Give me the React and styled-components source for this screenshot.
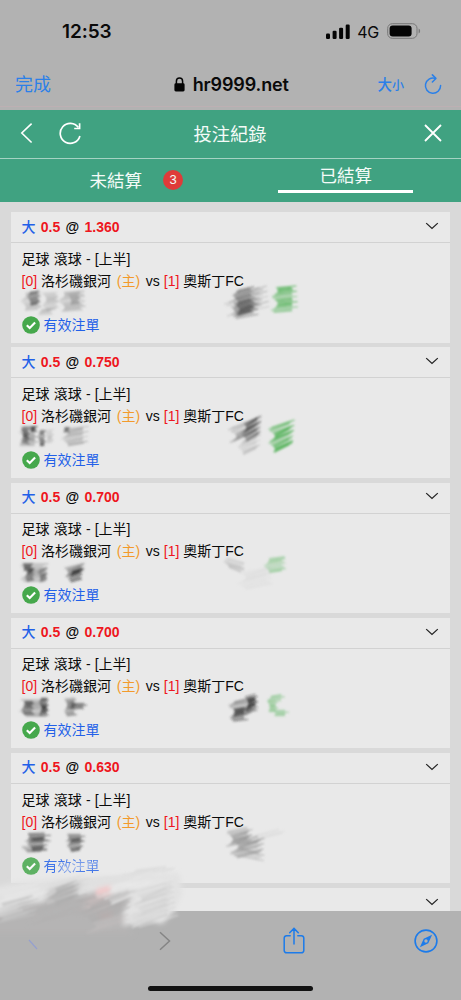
import React from 'react';
import styled, { createGlobalStyle } from 'styled-components';

const GlobalStyle = createGlobalStyle`
  * {
    box-sizing: border-box;
  }
  body {
    margin: 0;
    background: #b2b2b2;
    font-family: 'Liberation Sans', 'Noto Sans CJK TC', sans-serif;
  }
`;

const Phone = styled.div`
  position: relative;
  display: flex;
  flex-direction: column;
  width: 461px;
  height: 1000px;
  overflow: hidden;
  background: #b2b2b2;
  color: #0a0a0a;

  svg {
    display: block;
    flex: none;
  }
`;
const StatusBar = styled.div`
  display: flex;
  align-items: center;
  height: 62px;
  padding: 0 40px 0 62px;
  font-family: Inter, sans-serif;
`;
const Clock = styled.span`
  flex: 1;
  font-size: 19px;
  font-weight: 600;
  letter-spacing: -0.1px;
`;
const Network = styled.span`
  margin: 1px 8px 0 7px;
  font-size: 16px;
  font-weight: 400;
  letter-spacing: -0.2px;
`;
const AddressBar = styled.div`
  display: grid;
  grid-template-columns: 1fr auto 1fr;
  align-items: center;
  height: 45px;
  padding: 0 19px 2px 15px;
  border-bottom: 1px solid #bdb0b3;
`;
const LinkText = styled.span`
  color: #2b80e8;
  font-family: 'Noto Sans CJK TC', sans-serif;
  font-size: ${(props) => props.$size || 18}px;
  line-height: 24px;
`;
const Address = styled.div`
  display: flex;
  align-items: center;
  gap: 7.5px;
  padding: 2px 0 0 6px;
  font-family: Inter, sans-serif;
  font-size: 18px;
  font-weight: 600;
  letter-spacing: -0.15px;
`;
const AddressActions = styled.div`
  display: flex;
  align-items: center;
  justify-content: flex-end;
  padding-top: 2px;

  svg {
    margin-left: 20px;
  }
`;
const SizeLabel = styled.div`
  display: flex;
  align-items: baseline;

  span {
    font-weight: 500;
  }
`;
const Header = styled.div`
  display: grid;
  grid-template-columns: 1fr auto 1fr;
  align-items: center;
  height: 49px;
  margin-top: 3px;
  padding: 0 18px 2px 19px;
  background: #40a281;
  border-bottom: 1px solid #a5d3c3;
`;
const HeaderIcons = styled.div`
  display: flex;
  align-items: center;
  gap: 24px;
  justify-content: ${(props) => (props.$end ? 'flex-end' : 'flex-start')};
`;
const Title = styled.h1`
  margin: 0 0 0 -2px;
  color: #f4fbf8;
  font-family: 'Noto Sans CJK TC', sans-serif;
  font-size: 18.3px;
  font-weight: 400;
  line-height: 28px;
`;
const Tabs = styled.div`
  display: flex;
  height: 43px;
  background: #40a281;
`;
const Tab = styled.div`
  display: flex;
  flex: 1;
  align-items: center;
  justify-content: center;
  padding-left: ${(props) => (props.$active ? 0 : 42)}px;
  padding-right: 21px;
  color: #f4fbf8;
  font-family: 'Noto Sans CJK TC', sans-serif;
  font-size: 17.5px;
`;
const TabLabel = styled.span`
  width: ${(props) => (props.$active ? '135px' : 'auto')};
  height: ${(props) => (props.$active ? '34px' : 'auto')};
  margin-bottom: ${(props) => (props.$active ? 9 : 2)}px;
  border-bottom: ${(props) => (props.$active ? '3px solid #fff' : 'none')};
  line-height: ${(props) => (props.$active ? 32 : 34)}px;
  text-align: center;
`;
const Badge = styled.span`
  width: 20px;
  height: 20px;
  margin: 0 0 2px 21px;
  border-radius: 50%;
  background: #df3b39;
  font-family: 'Liberation Sans', sans-serif;
  font-size: 13px;
  line-height: 20px;
  text-align: center;
`;
const List = styled.div`
  display: flex;
  flex-direction: column;
  gap: 4.7px;
  height: 709px;
  padding: 10.2px 11px 0 10.5px;
  overflow: hidden;
  background: #d9d9d9;
`;
const CardBox = styled.div`
  position: relative;
  flex: none;
  height: 130.5px;
  background: #e9e9e9;
`;
const CardHead = styled.div`
  display: flex;
  align-items: center;
  justify-content: space-between;
  height: 31px;
  padding: 0 11.5px 0 11px;
  border-bottom: 1px solid #d2d2d2;

  svg {
    margin-bottom: 2.5px;
  }
`;
const Pick = styled.div`
  font-size: 14px;
  font-weight: 700;
  word-spacing: 1.4px;
  line-height: 29px;
`;
const Side = styled.span`
  color: #2260e8;
  font-weight: 500;
`;
const CardBody = styled.div`
  padding: 4.7px 11px 0;
`;
const Line = styled.div`
  height: 22px;
  font-size: 14px;
  line-height: 22px;
  white-space: nowrap;
  word-spacing: ${(props) => props.$spread || 0}px;
`;
const Red = styled.span`
  color: #ee1620;
`;
const Home = styled.span`
  margin: 0 1.8px 0 2px;
  color: #f39a2b;
`;
const Status = styled.div`
  display: flex;
  align-items: center;
  gap: 4px;
  height: 22px;
  margin-top: 22px;
  color: #2260e8;
  font-size: 14px;
  line-height: 22px;
  opacity: ${(props) => (props.$faded ? 0.85 : 1)};
`;
const Overlay = styled.svg`
  position: absolute;
  top: ${(props) => props.$top || 0}px;
  left: 0;
  pointer-events: none;
`;
const Toolbar = styled.div`
  display: grid;
  grid-template-columns: 127px 125px 131px auto;
  align-items: center;
  height: 59px;
  padding-left: 31px;

  svg:first-child {
    margin-left: -6px;
  }
`;
const HomeIndicator = styled.div`
  width: 165px;
  height: 5px;
  margin: 16px auto 0;
  border-radius: 3px;
  background: #121212;
`;

const GREEN = '#55b35a';

// patch: [x, y, width, height, slope, colour, opacity]
const hatch = ([x, y, w, h, slope, color, opacity], seed) => {
  const strokes = [];
  const count = Math.max(3, Math.round(h / 1.7));
  for (let i = 0; i < count; i += 1) {
    const a = Math.abs(Math.sin((i + 1) * 12.98 + seed * 7.3));
    const b = Math.abs(Math.sin((i + 1) * 4.17 + seed * 3.1));
    const x1 = x + a * w * 0.25;
    const x2 = x + w - b * w * 0.25;
    const y1 = y + (h * (i + 0.5)) / count;
    strokes.push(
      <path
        key={`${seed}-${i}`}
        d={`M${x1} ${y1 + slope * w * 0.5}L${x2} ${y1 - slope * w * 0.5}`}
        stroke={color}
        strokeWidth={1.3 + b}
        strokeOpacity={opacity * (0.45 + a * 0.55)}
      />
    );
  }
  return strokes;
};

const bets = [
  {
    odds: '1.360',
    smudges: [
      [9, 80, 24, 18, 0.05, '#999', 0.4],
      [16, 79, 14, 14, 0.1, '#444', 0.6],
      [31, 80, 18, 18, 0.05, '#888', 0.35],
      [46, 79, 31, 20, 0.05, '#888', 0.4],
      [27, 97, 16, 6, 0.05, '#888', 0.4],
      [57, 81, 13, 12, 0.1, '#666', 0.35],
      [212, 78, 48, 22, 0.2, '#888', 0.4],
      [221, 76, 24, 26, 0.17, '#555', 0.55],
      [222, 88, 26, 17, 0.16, '#444', 0.6],
      [260, 74, 27, 26, 0.06, GREEN, 0.75],
    ],
  },
  {
    odds: '0.750',
    smudges: [
      [8, 79, 20, 20, 0, '#666', 0.5],
      [10, 80, 9, 17, -0.2, '#333', 0.6],
      [18, 79, 8, 6, 0.1, '#333', 0.7],
      [27, 83, 8, 16, 0, '#333', 0.65],
      [34, 82, 9, 14, 0.1, '#999', 0.4],
      [50, 80, 28, 18, 0.1, '#777', 0.4],
      [52, 80, 7, 6, 0, '#333', 0.6],
      [217, 75, 34, 16, 0.32, '#777', 0.5],
      [230, 72, 21, 19, 0.38, '#444', 0.6],
      [226, 90, 25, 15, 0.25, '#999', 0.35],
      [257, 76, 28, 26, 0.28, GREEN, 0.85],
    ],
  },
  {
    odds: '0.700',
    smudges: [
      [9, 80, 30, 19, 0, '#777', 0.5],
      [10, 80, 13, 8, 0, '#333', 0.6],
      [14, 86, 10, 12, 0.2, '#333', 0.6],
      [27, 85, 10, 13, 0.3, '#444', 0.5],
      [51, 82, 25, 10, 0.2, '#555', 0.5],
      [57, 86, 16, 12, 0.2, '#222', 0.65],
      [212, 77, 24, 10, -0.2, '#999', 0.4],
      [225, 86, 40, 18, 0.15, '#ccc', 0.25],
      [252, 74, 25, 15, 0.08, GREEN, 0.4],
    ],
  },
  {
    odds: '0.700',
    smudges: [
      [8, 81, 29, 18, 0, '#777', 0.5],
      [10, 83, 14, 14, 0, '#333', 0.6],
      [28, 80, 10, 18, 0, '#222', 0.75],
      [53, 80, 13, 18, 0.1, '#555', 0.6],
      [55, 85, 22, 6, 0, '#333', 0.5],
      [217, 81, 30, 16, 0.15, '#555', 0.55],
      [234, 77, 13, 16, 0.2, '#222', 0.75],
      [219, 90, 18, 13, 0.1, '#333', 0.65],
      [256, 77, 18, 7, 0.1, GREEN, 0.5],
      [256, 82, 11, 12, 0, GREEN, 0.5],
      [260, 92, 18, 6, 0, GREEN, 0.4],
    ],
  },
  {
    odds: '0.630',
    faded: true,
    smudges: [
      [11, 80, 29, 9, 0.02, '#444', 0.6],
      [16, 85, 21, 13, 0.06, '#333', 0.65],
      [10, 93, 26, 6, 0.02, '#555', 0.5],
      [52, 81, 23, 8, 0, '#555', 0.55],
      [56, 86, 17, 12, 0.1, '#333', 0.65],
      [215, 76, 28, 16, 0.15, '#888', 0.7],
      [218, 86, 38, 16, 0.18, '#888', 0.6],
      [222, 97, 34, 9, -0.15, '#999', 0.5],
      [240, 79, 37, 5, 0.18, '#bbb', 0.3],
      [36, 109, 58, 9, 0.1, '#ececec', 0.5],
      [110, 115, 60, 6, 0.06, '#ccc', 0.35],
    ],
  },
];

// fine streaks laid over the smear
const smearPatches = [
  [-12, 886, 66, 16, 0.14, '#e8e8e8', 0.6],
  [-10, 899, 52, 20, 0.16, '#c4c4c4', 0.7],
  [-8, 904, 34, 10, 0.2, '#dedede', 0.6],
  [34, 880, 62, 18, 0.2, '#d8d8d8', 0.5],
  [48, 884, 34, 18, 0.25, '#a8a8a8', 0.5],
  [24, 901, 74, 18, 0.2, '#b3b2b2', 0.6],
  [76, 893, 60, 22, 0.25, '#adabab', 0.6],
  [92, 878, 80, 18, 0.22, '#ebebeb', 0.6],
  [126, 884, 54, 38, 0.22, '#e6e6e6', 0.55],
  [130, 886, 48, 34, 0.22, '#bfbfbf', 0.35],
  [84, 918, 50, 12, 0.18, '#c2bebe', 0.5],
  [122, 908, 44, 15, 0.25, '#dadada', 0.6],
  [60, 876, 110, 6, 0.1, '#dcdcdc', 0.5],
  [130, 870, 50, 12, 0.1, '#e2e2e2', 0.5],
];

const Chevron = () => (
  <svg width="14" height="8" viewBox="0 0 14 8" fill="none">
    <path d="M1.2 1.1L7 6.5l5.8-5.4" stroke="#222" strokeWidth="1.25" />
  </svg>
);

const CheckIcon = () => (
  <svg width="18" height="18" viewBox="0 0 18 18" fill="none">
    <circle cx="9" cy="9" r="8.8" fill="#46a84c" />
    <path d="M4.8 9.2l2.9 2.8 5.4-5.5" stroke="#fff" strokeWidth="2.1" />
  </svg>
);

const BetCard = ({ bet, seed }) => (
  <CardBox>
    <CardHead>
      <Pick>
        {bet && (
          <>
            <Side>大</Side> <Red>0.5</Red> @ <Red>{bet.odds}</Red>
          </>
        )}
      </Pick>
      <Chevron />
    </CardHead>
    {bet && (
      <CardBody>
        <Line $spread={0.3}>足球 滾球 - [上半]</Line>
        <Line>
          <Red>[0]</Red> 洛杉磯銀河 <Home>(主)</Home> vs <Red>[1]</Red>{' '}
          奧斯丁FC
        </Line>
        <Status $faded={bet.faded}>
          <CheckIcon />
          有效注單
        </Status>
      </CardBody>
    )}
    {bet && (
      <Overlay width="439" height="130" viewBox="0 0 439 130" fill="none">
        <defs>
          <filter id={`soft${seed}`} x="-10%" y="-10%" width="120%" height="120%">
            <feGaussianBlur stdDeviation="0.9" />
          </filter>
        </defs>
        <g filter={`url(#soft${seed})`}>
          {bet.smudges.map((patch, i) => hatch(patch, seed * 10 + i))}
        </g>
      </Overlay>
    )}
  </CardBox>
);

const Smear = () => (
  <Overlay $top={850} width="200" height="110" viewBox="0 850 200 110" fill="none">
    <defs>
      <filter id="smearBase" x="-10%" y="-20%" width="120%" height="140%">
        <feGaussianBlur stdDeviation="2.4" />
      </filter>
      <filter id="smearStroke" x="-10%" y="-20%" width="120%" height="140%">
        <feGaussianBlur stdDeviation="0.9" />
      </filter>
    </defs>
    <g filter="url(#smearBase)">
      <path
        d="M-10 888L16 882 60 878 110 876 180 874 182 894 174 912 162 924 150 921 122 926 60 912 -10 914Z"
        fill="#e2e2e2"
      />
      <path
        d="M-10 918L14 906 44 902 50 890 66 885 82 882 74 897 98 891 106 897 136 890 124 908 122 925 134 934 -10 934Z"
        fill="#b5b4b4"
      />
      <path d="M86 898l26-6-4 14-26 4z" fill="#c6bcbc" />
      <path d="M96 889l15-4v9l-14 3z" fill="#efc9ca" />
      <path d="M98 914l14-2v4l-12 2z" fill="#bfaead" />
    </g>
    <g filter="url(#smearStroke)">
      {smearPatches.map((patch, i) => hatch(patch, 80 + i))}
      <path d="M96 892l15-4M97 895l13-3" stroke="#f0cfd0" strokeWidth="2" strokeOpacity="0.5" />
    </g>
  </Overlay>
);

const App = () => (
  <>
    <GlobalStyle />
    <Phone>
      <StatusBar>
        <Clock>12:53</Clock>
        <svg width="24" height="15" viewBox="0 0 24 15" fill="#050505">
          <rect x="0" y="9.5" width="4" height="5.5" rx="1.2" />
          <rect x="6.6" y="6.8" width="4" height="8.2" rx="1.2" />
          <rect x="13.1" y="3.8" width="4" height="11.2" rx="1.2" />
          <rect x="19.7" y="0.5" width="4" height="14.5" rx="1.2" />
        </svg>
        <Network>4G</Network>
        <svg width="34" height="16" viewBox="0 0 34 16" fill="none">
          <rect x="0.7" y="0.7" width="29.3" height="14.6" rx="4.6" stroke="#777" />
          <rect x="2.6" y="2.6" width="22" height="10.8" rx="3" fill="#050505" />
          <path d="M31.6 5.5c2 .9 2 4.1 0 5z" fill="#777" />
        </svg>
      </StatusBar>
      <AddressBar>
        <LinkText>完成</LinkText>
        <Address>
          <svg width="11" height="15" viewBox="0 0 11 15" fill="none">
            <rect x="0.4" y="6.3" width="10.2" height="8.2" rx="1.4" fill="#050505" />
            <path d="M2.4 7V4.2a3.1 3.1 0 016.2 0V7" stroke="#050505" strokeWidth="1.5" />
          </svg>
          hr9999.net
        </Address>
        <AddressActions>
          <SizeLabel>
            <LinkText $size={14.5}>大</LinkText>
            <LinkText $size={12}>小</LinkText>
          </SizeLabel>
          <svg width="18" height="21" viewBox="0 0 18 21" fill="none" stroke="#2b80e8">
            <path d="M11.2 4.4A7.6 7.6 0 1016.6 11.6" strokeWidth="1.5" strokeLinecap="round" />
            <path
              d="M8.4 0.9l3.5 3.5-3.5 3.6"
              strokeWidth="1.5"
              strokeLinecap="round"
              strokeLinejoin="round"
            />
          </svg>
        </AddressActions>
      </AddressBar>
      <Header>
        <HeaderIcons>
          <svg width="16" height="22" viewBox="0 0 16 22" fill="none">
            <path d="M12.6 1.6L2.8 11l9.8 9.5" stroke="#fff" strokeWidth="1.6" />
          </svg>
          <svg width="23" height="23" viewBox="0 0 23 23" fill="none" stroke="#fff">
            <path d="M20.9 14A10 10 0 1119.4 5.6" strokeWidth="1.7" />
            <path d="M20.6 1.2v5.3h-5.4" strokeWidth="1.7" />
          </svg>
        </HeaderIcons>
        <Title>投注紀錄</Title>
        <HeaderIcons $end>
          <svg width="20" height="20" viewBox="0 0 20 20" fill="none">
            <path d="M2 2l16 16M18 2L2 18" stroke="#fff" strokeWidth="1.8" />
          </svg>
        </HeaderIcons>
      </Header>
      <Tabs>
        <Tab>
          <TabLabel>未結算</TabLabel>
          <Badge>3</Badge>
        </Tab>
        <Tab $active>
          <TabLabel $active>已結算</TabLabel>
        </Tab>
      </Tabs>
      <List>
        {bets.map((bet, i) => (
          <BetCard key={i} bet={bet} seed={i + 1} />
        ))}
        <BetCard />
      </List>
      <Smear />
      <Toolbar>
        <svg width="14" height="22" viewBox="0 0 14 22" fill="none">
          <path d="M4 10l8 9" stroke="#8f9bd6" strokeWidth="1.2" strokeOpacity="0.8" />
        </svg>
        <svg width="14" height="20" viewBox="0 0 14 20" fill="none">
          <path d="M2 1.2L11.5 10 2 18.8" stroke="#858585" strokeWidth="1.5" />
        </svg>
        <svg width="22" height="27" viewBox="0 0 22 27" fill="none" stroke="#1c7bea">
          <path
            d="M7.2 8.7H3.6A2.4 2.4 0 001.2 11v12.4a2.4 2.4 0 002.4 2.4h14.8a2.4 2.4 0 002.4-2.4V11a2.4 2.4 0 00-2.4-2.3h-3.6M11 17V1.8M6.7 5.8L11 1.4l4.3 4.4"
            strokeWidth="1.5"
            strokeLinecap="round"
          />
        </svg>
        <svg width="24" height="24" viewBox="0 0 24 24" fill="none">
          <circle cx="12" cy="12" r="10.9" stroke="#1c7bea" strokeWidth="1.6" />
          <path
            fillRule="evenodd"
            d="M18.1 5.8l-3.8 8.5-8.4 4 3.8-8.6zM12 10.3a1.7 1.7 0 100 3.4 1.7 1.7 0 000-3.4z"
            fill="#1c7bea"
          />
        </svg>
      </Toolbar>
      <HomeIndicator />
    </Phone>
  </>
);

export default App;
